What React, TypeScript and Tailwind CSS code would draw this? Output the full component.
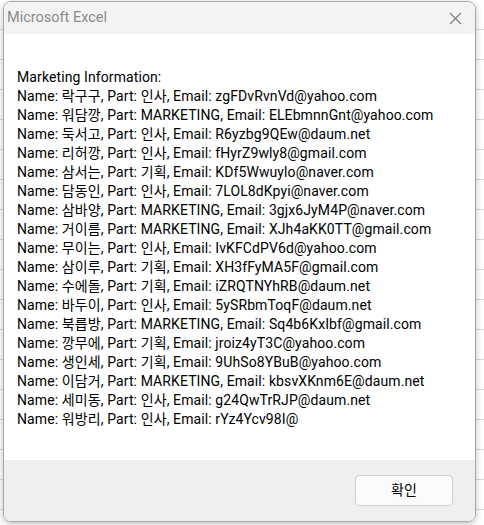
const people = [
  { name: "락구구", part: "인사", email: "zgFDvRvnVd@yahoo.com" },
  { name: "워담깡", part: "MARKETING", email: "ELEbmnnGnt@yahoo.com" },
  { name: "둑서고", part: "인사", email: "R6yzbg9QEw@daum.net" },
  { name: "리허깡", part: "인사", email: "fHyrZ9wly8@gmail.com" },
  { name: "삼서는", part: "기획", email: "KDf5Wwuylo@naver.com" },
  { name: "담동인", part: "인사", email: "7LOL8dKpyi@naver.com" },
  { name: "삼바양", part: "MARKETING", email: "3gjx6JyM4P@naver.com" },
  { name: "거이름", part: "MARKETING", email: "XJh4aKK0TT@gmail.com" },
  { name: "무이는", part: "인사", email: "IvKFCdPV6d@yahoo.com" },
  { name: "삼이루", part: "기획", email: "XH3fFyMA5F@gmail.com" },
  { name: "수에돌", part: "기획", email: "iZRQTNYhRB@daum.net" },
  { name: "바두이", part: "인사", email: "5ySRbmToqF@daum.net" },
  { name: "북릅방", part: "MARKETING", email: "Sq4b6KxIbf@gmail.com" },
  { name: "깡무에", part: "기획", email: "jroiz4yT3C@yahoo.com" },
  { name: "생인세", part: "기획", email: "9UhSo8YBuB@yahoo.com" },
  { name: "이담거", part: "MARKETING", email: "kbsvXKnm6E@daum.net" },
  { name: "세미동", part: "인사", email: "g24QwTrRJP@daum.net" },
  { name: "워방리", part: "인사", email: "rYz4Ycv98I@" },
];

const App = () => {
  return (
    <div className="w-[484px] h-[525px] overflow-hidden bg-white bg-[repeating-linear-gradient(180deg,transparent_0px,transparent_29px,#d9d9d9_29px,#d9d9d9_30px)] font-['Roboto','Noto_Sans_CJK_KR',sans-serif]">
      <div className="ml-[3px] mt-[1px] w-[473px] h-[521px] flex flex-col rounded-[8px] border border-[#a8a8a8] overflow-hidden shadow-[0_2px_6px_rgba(0,0,0,0.25)]">
        <div className="h-[32px] shrink-0 bg-[#f3f3f3] flex items-center justify-between pl-[3px] pr-[13px]">
          <span className="text-[14.5px] text-[#8a8a8a]">Microsoft Excel</span>
          <svg width="13" height="13" viewBox="0 0 13 13" className="text-[#7a7a7a]">
            <path d="M1 1L12 12M12 1L1 12" stroke="currentColor" strokeWidth="1.1" />
          </svg>
        </div>
        <div className="flex-1 bg-white pl-[13px] pt-[34px] text-[14px] leading-[19px] tracking-[0.1px] text-black">
          <p>Marketing Information:</p>
          {people.map((p) => (
            <p key={p.name}>
              Name: {p.name}, Part: {p.part}, Email: {p.email}
            </p>
          ))}
        </div>
        <div className="h-[61px] shrink-0 bg-[#efefef] flex items-start justify-end pt-[15px] pr-[22px]">
          <button className="w-[98px] h-[31px] rounded-[4px] border border-[#cfcfcf] bg-[#fbfbfb] text-[14px] text-black">
            확인
          </button>
        </div>
      </div>
    </div>
  );
};

export default App;
